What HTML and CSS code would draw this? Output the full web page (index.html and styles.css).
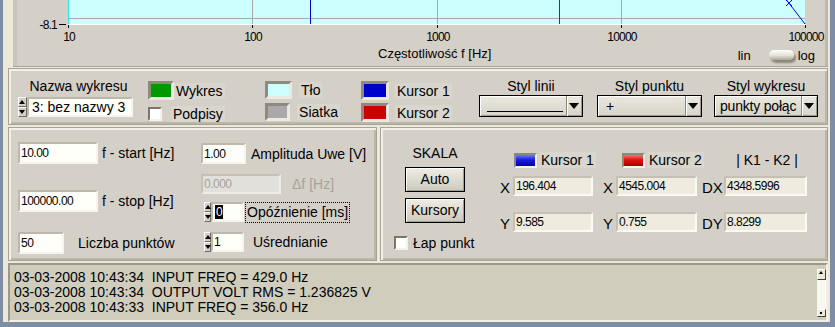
FILE: index.html
```html
<!DOCTYPE html>
<html lang="pl">
<head>
    <meta charset="UTF-8">
    <title>Wykres - analizator</title>
    <link rel="stylesheet" href="styles.css">
</head>
<body>
<div class="window">

    <div class="graph">
        <svg class="plot" width="815" height="44" viewBox="13 0 815 44">
            <rect x="68" y="0" width="737" height="24" fill="#ccffff"/>
            <g stroke="#a8a8a8">
                <line x1="68" y1="18.5" x2="805" y2="18.5"/>
                <line x1="252.5" y1="0" x2="252.5" y2="24"/>
                <line x1="437.5" y1="0" x2="437.5" y2="24"/>
                <line x1="621.5" y1="0" x2="621.5" y2="24"/>
            </g>
            <line x1="68.5" y1="0" x2="68.5" y2="24" stroke="#2ee8e8"/>
            <line x1="68" y1="24.5" x2="806" y2="24.5" stroke="#ffffff"/>
            <line x1="310.5" y1="0" x2="310.5" y2="24" stroke="#0000cc"/>
            <line x1="559.5" y1="0" x2="559.5" y2="24" stroke="#cc0000"/>
            <path d="M786.5 0 L805 24 M786 0 L792 6 M792 0 L786 6" stroke="#0000ff" fill="none"/>
            <g stroke="#000">
                <line x1="59" y1="24.5" x2="66" y2="24.5"/>
                <line x1="68.5" y1="25" x2="68.5" y2="28"/>
                <line x1="252.5" y1="25" x2="252.5" y2="28"/>
                <line x1="437.5" y1="25" x2="437.5" y2="28"/>
                <line x1="621.5" y1="25" x2="621.5" y2="28"/>
                <line x1="805.5" y1="25" x2="805.5" y2="28"/>
            </g>
            <g class="ticks" text-anchor="middle">
                <text x="69" y="41">10</text>
                <text x="253" y="41">100</text>
                <text x="438" y="41">1000</text>
                <text x="622" y="41">10000</text>
                <text x="806" y="41">100000</text>
            </g>
            <text class="ticks" x="57" y="29" text-anchor="end">-8.1</text>
        </svg>
        <div class="axis-row">
            <span class="axis-title">Częstotliwość f [Hz]</span>
            <span class="scale-lin">lin</span>
            <span class="toggle"></span>
            <span class="scale-log">log</span>
        </div>
    </div>

    <div class="panel settings">
        <div class="g-name">
            <div class="cap">Nazwa wykresu</div>
            <div class="row">
                <div class="spin"><span class="up"></span><span class="dn"></span></div>
                <div class="num name-in">3: bez nazwy 3</div>
            </div>
        </div>
        <div class="g-plot">
            <div class="item"><span class="swatch sw-green"></span><span class="tag">Wykres</span></div>
            <div class="item small"><span class="chk"></span><span class="tag lbl-podpisy">Podpisy</span></div>
        </div>
        <div class="g-bg">
            <div class="item"><span class="swatch sw-cyan"></span><span class="tag">Tło</span></div>
            <div class="item"><span class="swatch sw-gray"></span><span class="tag">Siatka</span></div>
        </div>
        <div class="g-cur">
            <div class="item"><span class="swatch sw-blue"></span><span class="tag">Kursor 1</span></div>
            <div class="item"><span class="swatch sw-red"></span><span class="tag">Kursor 2</span></div>
        </div>
        <div class="g-ring r1">
            <div class="cap">Styl linii</div>
            <div class="ring"><span class="ring-val"><span class="line-sample"></span></span><span class="ring-btn"></span></div>
        </div>
        <div class="g-ring r2">
            <div class="cap">Styl punktu</div>
            <div class="ring"><span class="ring-val">+</span><span class="ring-btn"></span></div>
        </div>
        <div class="g-ring r3">
            <div class="cap">Styl wykresu</div>
            <div class="ring"><span class="ring-val">punkty połąc</span><span class="ring-btn"></span></div>
        </div>
    </div>

    <div class="middle">
        <div class="panel params">
            <div class="col-a">
                <div class="field"><div class="num w80">10.00</div><span class="lbl-a">f - start [Hz]</span></div>
                <div class="field f2"><div class="num w80">100000.00</div><span class="lbl-a">f - stop [Hz]</span></div>
                <div class="field f3"><div class="num w46">50</div><span class="lbl-pts">Liczba punktów</span></div>
            </div>
            <div class="col-b">
                <div class="field b1"><div class="num w45">1.00</div><span class="lbl-amp">Amplituda Uwe [V]</span></div>
                <div class="field b2"><div class="num off">0.000</div><span class="lbl-off">Δf [Hz]</span></div>
                <div class="field b3">
                    <div class="spin"><span class="up"></span><span class="dn"></span></div>
                    <div class="num w33"><span class="sel">0</span></div>
                    <span class="lbl-focus">Opóźnienie [ms]</span>
                </div>
                <div class="field b4">
                    <div class="spin"><span class="up"></span><span class="dn"></span></div>
                    <div class="num w33">1</div>
                    <span class="lbl-avg">Uśrednianie</span>
                </div>
            </div>
        </div>

        <div class="panel cursors">
            <div class="skala">
                <div class="skala-cap">SKALA</div>
                <div class="btn">Auto</div>
                <div class="btn">Kursory</div>
                <div class="chk-row"><span class="chk"></span><span class="lbl-lap">Łap punkt</span></div>
            </div>
            <div class="readouts">
                <div class="hd hd1"><span class="led led-blue"></span><span class="tag">Kursor 1</span></div>
                <div class="hd hd2"><span class="led led-red"></span><span class="tag">Kursor 2</span></div>
                <div class="hd hd3">| K1 - K2 |</div>

                <span class="axl c1 rx">X</span><div class="num ind c2 rx">196.404</div>
                <span class="axl c4 rx">X</span><div class="num ind c5 rx">4545.004</div>
                <span class="axl c7 rx">DX</span><div class="num ind c8 rx">4348.5996</div>

                <span class="axl c1 ry">Y</span><div class="num ind c2 ry">9.585</div>
                <span class="axl c4 ry">Y</span><div class="num ind c5 ry">0.755</div>
                <span class="axl c7 ry">DY</span><div class="num ind c8 ry">8.8299</div>
            </div>
        </div>
    </div>

    <div class="log">
        <div class="log-text">03-03-2008 10:43:34  INPUT FREQ = 429.0 Hz
03-03-2008 10:43:34  OUTPUT VOLT RMS = 1.236825 V
03-03-2008 10:43:33  INPUT FREQ = 356.0 Hz</div>
        <div class="sb"><span class="sb-up"></span><span class="sb-track"></span><span class="sb-dn"></span></div>
    </div>

</div>
</body>
</html>
```

FILE: styles.css
```css
* {
    box-sizing: border-box;
}
body {
    margin: 0;
    background: #ece9d8;
    font-family: "Liberation Sans", Arial, sans-serif;
    font-size: 14px;
    color: #000;
}
.window {
    width: 835px;
    height: 327px;
    overflow: hidden;
    background: #ece9d8;
    border-left: 3px solid #7f8ca6;
    border-right: 5px solid #7f8ca6;
    border-bottom: 5px solid #7f8ca6;
}

/* graph */
.graph {
    margin-left: 10px;
    width: 815px;
    height: 66px;
    background: #d4d0c8;
    box-shadow: inset 4px 0 #c9c5ba, inset -3px 0 #bdb9ae, 0 1px #a8a498;
}
.plot {
    display: block;
}
.ticks {
    font-family: "Liberation Sans", Arial, sans-serif;
    font-size: 12px;
    letter-spacing: -0.8px;
}
.axis-row {
    display: flex;
    align-items: center;
    height: 22px;
    padding-right: 13px;
    font-size: 13px;
}
.axis-title {
    margin-left: 365px;
    margin-top: -3px;
}
.scale-lin {
    margin-left: auto;
}
.toggle {
    width: 25px;
    height: 10px;
    margin: 0 4px 0 18px;
    border-radius: 5px;
    background: linear-gradient(#ffffff, #e4e1d6 55%, #aaa69a);
    box-shadow: 2px 3px 2px #8c887c;
}

/* panels */
.panel {
    background: #d4d0c8;
    border: 1px solid #a6a296;
    box-shadow: inset 2px 2px #f1efe7, inset -2px -2px #bab6aa;
}
.settings {
    display: flex;
    align-items: flex-start;
    margin: 2px 0 0 5px;
    width: 820px;
    height: 57px;
}
.cap {
    line-height: 16px;
    text-align: center;
    white-space: nowrap;
}
.g-name {
    margin-left: 9px;
    width: 115px;
    padding-top: 9px;
}
.g-name .cap {
    padding-left: 6px;
}
.row {
    display: flex;
    margin-top: 3px;
}
.spin {
    width: 9px;
    height: 20px;
    display: flex;
    flex-direction: column;
}
.spin span {
    flex: 1;
    position: relative;
    background: #d4d0c8;
    border: 1px solid;
    border-color: #fff #6e6a60 #6e6a60 #fff;
}
.spin span::after {
    content: "";
    position: absolute;
    left: 0;
    top: 2px;
    border-left: 3px solid transparent;
    border-right: 3px solid transparent;
}
.spin .up::after {
    border-bottom: 4px solid #000;
}
.spin .dn::after {
    border-top: 4px solid #000;
}
.num {
    height: 22px;
    background: #fffffa;
    border: 2px solid;
    border-color: #bcb8ac #f6f4ec #f6f4ec #bcb8ac;
    font-size: 12px;
    letter-spacing: -0.5px;
    line-height: 18px;
    padding-left: 1px;
    white-space: nowrap;
    overflow: hidden;
}
.name-in {
    width: 106px;
    height: 20px;
    font-size: 14px;
    letter-spacing: 0;
    line-height: 16px;
    padding-left: 3px;
}
.g-plot, .g-bg, .g-cur {
    display: flex;
    flex-direction: column;
    padding-top: 12px;
}
.g-plot {
    margin-left: 15px;
    width: 77px;
    gap: 6px;
}
.g-bg {
    margin-left: 40px;
    width: 75px;
    gap: 4px;
}
.g-cur {
    margin-left: 21px;
    width: 92px;
    gap: 3px;
}
.item {
    display: flex;
    align-items: center;
    height: 19px;
}
.g-bg .item {
    height: 18px;
}
.item.small {
    height: 15px;
}
.swatch {
    width: 26px;
    height: 19px;
    border: 3px solid;
    border-color: #8e8a80 #ecEAE0 #ecEAE0 #8e8a80;
}
.g-bg .swatch {
    width: 27px;
    height: 18px;
}
.g-cur .swatch {
    width: 28px;
}
.sw-green { background: #009900; }
.sw-cyan { background: #ccffff; }
.sw-gray { background: #a9a9a9; }
.sw-blue { background: #0000cc; }
.sw-red { background: #cc0000; }
.tag {
    background: #d9d6cd;
    padding: 0 2px;
    line-height: 16px;
    white-space: nowrap;
}
.g-plot .lbl-podpisy {
    margin-left: 9px;
}
.g-bg .tag {
    margin-left: 7px;
}
.g-cur .tag {
    margin-left: 6px;
}
.chk {
    width: 14px;
    height: 14px;
    flex: none;
    background: #fff;
    border: 2px solid;
    border-color: #7a766c #f4f2ea #f4f2ea #7a766c;
}
.g-ring {
    padding-top: 9px;
}
.g-ring.r1 {
    margin-left: 26px;
    width: 104px;
}
.g-ring.r2 {
    margin-left: 14px;
    width: 105px;
}
.g-ring.r3 {
    margin-left: 12px;
    width: 104px;
}
.ring {
    display: flex;
    height: 22px;
    margin-top: 1px;
    border: 1px solid #000;
    background: linear-gradient(#ebe9e0, #d6d3c8);
    box-shadow: inset 1px 1px #fff, inset -1px -1px #9c988c;
}
.ring-val {
    flex: 1;
    display: flex;
    align-items: center;
    padding-left: 8px;
    overflow: hidden;
    white-space: nowrap;
}
.r3 .ring-val {
    padding-left: 5px;
    letter-spacing: -0.2px;
}
.line-sample {
    align-self: flex-end;
    width: 76px;
    height: 1px;
    margin: 0 0 4px -1px;
    background: #000;
}
.ring-btn {
    width: 16px;
    flex: none;
    position: relative;
    border-left: 1px solid #8c887c;
    box-shadow: inset 1px 0 #fff;
}
.ring-btn::after {
    content: "";
    position: absolute;
    left: 2px;
    top: 7px;
    border-left: 5px solid transparent;
    border-right: 5px solid transparent;
    border-top: 6px solid #000;
}

/* middle row */
.middle {
    display: flex;
    margin: 2px 0 0 5px;
    height: 134px;
}
.params {
    display: flex;
    width: 369px;
}
.field {
    display: flex;
    align-items: center;
    height: 22px;
    white-space: nowrap;
}
.col-a {
    margin-left: 9px;
    width: 181px;
    padding-top: 14px;
}
.col-a .f2 {
    margin-top: 26px;
}
.col-a .f3 {
    margin-top: 20px;
}
.w80 { width: 80px; }
.w46 { width: 46px; }
.w45 { width: 45px; height: 21px; }
.w33 { width: 33px; height: 20px; line-height: 16px; }
.lbl-a {
    margin-left: 4px;
}
.lbl-pts {
    margin-left: 14px;
}
.col-b {
    margin-left: 2px;
    padding-top: 15px;
}
.col-b .b1 {
    height: 21px;
}
.col-b .b2 {
    height: 20px;
    margin-top: 10px;
}
.col-b .b3 {
    height: 20px;
    margin-top: 8px;
}
.col-b .b4 {
    height: 20px;
    margin-top: 10px;
}
.col-b .spin {
    width: 7px;
    margin-left: 3px;
}
.lbl-amp {
    margin-left: 5px;
}
.num.off {
    width: 80px;
    height: 20px;
    line-height: 16px;
    background: #e2e0da;
    border-color: #c4c0b6 #eeece4 #eeece4 #c4c0b6;
    color: #a4a29c;
}
.lbl-off {
    margin-left: 11px;
    color: #a4a29c;
}
.sel {
    background: #000;
    color: #fff;
    padding: 0 1px;
    margin-left: 1px;
}
.lbl-focus {
    margin-left: 2px;
    padding: 1px 1px 2px;
    outline: 1px dotted #000;
    outline-offset: 0;
}
.lbl-avg {
    margin-left: 9px;
}

.cursors {
    display: flex;
    width: 448px;
    margin-left: 3px;
}
.skala {
    margin-left: 13px;
    width: 82px;
    padding-top: 17px;
    display: flex;
    flex-direction: column;
    align-items: center;
}
.skala-cap {
    line-height: 16px;
}
.btn {
    width: 60px;
    height: 25px;
    margin-top: 6px;
    border: 1px solid #000;
    background: linear-gradient(#efede4, #cdc9bd);
    box-shadow: inset 1px 1px #fff, inset -1px -1px #a09c90;
    text-align: center;
    line-height: 23px;
}
.chk-row {
    align-self: flex-start;
    display: flex;
    align-items: center;
    margin-top: 12px;
    white-space: nowrap;
}
.lbl-lap {
    margin-left: 5px;
}
.readouts {
    margin-left: 24px;
    padding-top: 24px;
    display: grid;
    grid-template-columns: 13px 80px 10px 13px 81px 5px 22px 83px;
    grid-template-rows: 16px 28px 36px;
    align-items: end;
}
.hd {
    display: flex;
    align-items: center;
    height: 16px;
    white-space: nowrap;
}
.hd1 {
    grid-column: 2 / 4;
    padding-left: 1px;
}
.hd2 {
    grid-column: 5 / 7;
    padding-left: 6px;
}
.hd3 {
    grid-column: 8;
    justify-content: center;
    padding-left: 3px;
}
.hd .tag {
    margin-left: 2px;
}
.led {
    width: 23px;
    height: 15px;
    flex: none;
    border: 2px solid;
    border-color: #8c887c #f4f2ea #f4f2ea #8c887c;
}
.led-blue {
    background: linear-gradient(#6a78ff, #1a1ae0 45%, #0000a8);
}
.led-red {
    background: linear-gradient(#ff7070, #e01010 45%, #a80000);
}
.axl {
    font-size: 15px;
    line-height: 15px;
    margin-bottom: 1px;
}
.num.ind {
    height: 20px;
    line-height: 16px;
    background: #efecdf;
    border-color: #c4c0b4 #fbfaf4 #fbfaf4 #c4c0b4;
}
.c1 { grid-column: 1; }
.c2 { grid-column: 2; }
.c4 { grid-column: 4; }
.c5 { grid-column: 5; }
.c7 { grid-column: 7; }
.c8 { grid-column: 8; }
.rx { grid-row: 2; }
.ry { grid-row: 3; }

/* log */
.log {
    display: flex;
    margin: 2px 0 0 5px;
    width: 820px;
    height: 59px;
    border: 2px solid;
    border-color: #9c988c #f2f0e6 #f2f0e6 #9c988c;
    background: #d0cdbd;
}
.log-text {
    flex: 1;
    padding: 5px 0 0 4px;
    white-space: pre;
    line-height: 15px;
}
.sb {
    width: 9px;
    margin: 4px 0 3px;
    display: flex;
    flex-direction: column;
    background: #f8f7f0;
}
.sb-up, .sb-dn {
    position: relative;
    border: 1px solid;
    border-color: #fff #404040 #404040 #fff;
    background: #ece9d8;
}
.sb-up {
    height: 11px;
}
.sb-up::after {
    content: "";
    position: absolute;
    left: 1px;
    top: 1px;
    border-left: 2px solid transparent;
    border-right: 2px solid transparent;
    border-bottom: 3px solid #000;
}
.sb-track {
    flex: 1;
}
.sb-dn {
    height: 8px;
}
.sb-dn::after {
    content: "";
    position: absolute;
    left: 2px;
    top: 2px;
    width: 2px;
    height: 2px;
    background: #000;
}
```
